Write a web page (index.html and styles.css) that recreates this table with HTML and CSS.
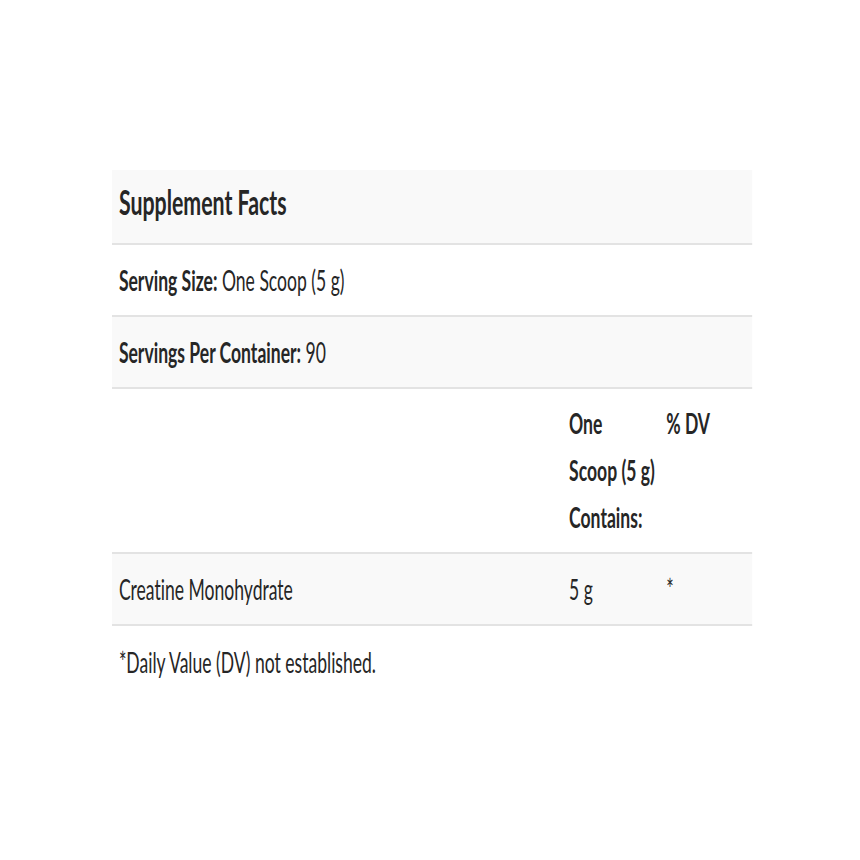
FILE: index.html
```html
<!DOCTYPE html>
<html lang="en">
<head>
<meta charset="utf-8">
<title>Supplement Facts</title>
<link rel="stylesheet" href="styles.css">
</head>
<body>
<div class="page">
  <div class="facts">
    <div class="row shade title-row">
      <div class="cell full"><span class="b">Supplement Facts</span></div>
    </div>
    <div class="row">
      <div class="cell full"><span class="b">Serving Size:</span>&nbsp;One Scoop (5 g)</div>
    </div>
    <div class="row shade">
      <div class="cell full"><span class="b">Servings Per Container:</span>&nbsp;90</div>
    </div>
    <div class="row head-row">
      <div class="cell"></div>
      <div class="cell b">One<br>Scoop (5 g)<br>Contains:</div>
      <div class="cell b">% DV</div>
    </div>
    <div class="row shade">
      <div class="cell mid">Creatine Monohydrate</div>
      <div class="cell mid">5 g</div>
      <div class="cell mid">*</div>
    </div>
    <p class="note">*Daily Value (DV) not established.</p>
  </div>
</div>
</body>
</html>
```
FILE: styles.css
```css
html, body {
  margin: 0;
  padding: 0;
  background: #ffffff;
  overflow: hidden;
}

.page {
  padding: 170px 0 0 112px;
}

.facts {
  width: 1021px;
  transform: scaleX(0.627);
  transform-origin: 0 0;
  font-family: Lato, "Open Sans", sans-serif;
  font-size: 28px;
  color: #262626;
  font-variant-ligatures: none;
}

.row {
  display: grid;
  grid-template-columns: 718px 155px 1fr;
  border-bottom: 2px solid #e3e3e3;
  height: 70px;
}

.row.shade {
  background: #f9f9f9;
}

.title-row {
  height: 73px;
  font-size: 34px;
}

.title-row .cell {
  padding-bottom: 11px;
}

.head-row {
  height: 163px;
}

.cell {
  padding: 0 11px;
  display: flex;
  align-items: center;
  white-space: nowrap;
}

.cell.full {
  grid-column: 1 / -1;
}

.head-row .cell {
  display: block;
  padding-top: 11px;
  line-height: 47px;
}

.b {
  font-weight: 700;
}

.note {
  margin: 16px 0 0;
  padding: 0 11px;
  line-height: 40px;
}
```
